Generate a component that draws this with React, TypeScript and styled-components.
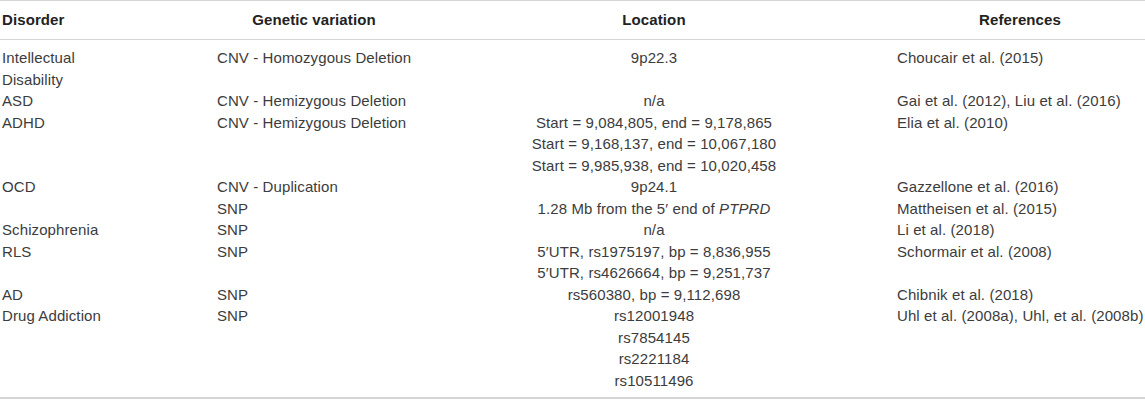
import React from 'react';
import styled, { createGlobalStyle } from 'styled-components';

type Row = {
  disorder: string;
  variation: string;
  location: React.ReactNode[];
  refs: string;
};

const rows: Row[] = [
  {
    disorder: 'Intellectual Disability',
    variation: 'CNV - Homozygous Deletion',
    location: ['9p22.3'],
    refs: 'Choucair et al. (2015)',
  },
  {
    disorder: 'ASD',
    variation: 'CNV - Hemizygous Deletion',
    location: ['n/a'],
    refs: 'Gai et al. (2012), Liu et al. (2016)',
  },
  {
    disorder: 'ADHD',
    variation: 'CNV - Hemizygous Deletion',
    location: [
      'Start = 9,084,805, end = 9,178,865',
      'Start = 9,168,137, end = 10,067,180',
      'Start = 9,985,938, end = 10,020,458',
    ],
    refs: 'Elia et al. (2010)',
  },
  {
    disorder: 'OCD',
    variation: 'CNV - Duplication',
    location: ['9p24.1'],
    refs: 'Gazzellone et al. (2016)',
  },
  {
    disorder: '',
    variation: 'SNP',
    location: [<>1.28 Mb from the 5′ end of <i>PTPRD</i></>],
    refs: 'Mattheisen et al. (2015)',
  },
  {
    disorder: 'Schizophrenia',
    variation: 'SNP',
    location: ['n/a'],
    refs: 'Li et al. (2018)',
  },
  {
    disorder: 'RLS',
    variation: 'SNP',
    location: [
      '5′UTR, rs1975197, bp = 8,836,955',
      '5′UTR, rs4626664, bp = 9,251,737',
    ],
    refs: 'Schormair et al. (2008)',
  },
  {
    disorder: 'AD',
    variation: 'SNP',
    location: ['rs560380, bp = 9,112,698'],
    refs: 'Chibnik et al. (2018)',
  },
  {
    disorder: 'Drug Addiction',
    variation: 'SNP',
    location: ['rs12001948', 'rs7854145', 'rs2221184', 'rs10511496'],
    refs: 'Uhl et al. (2008a), Uhl, et al. (2008b)',
  },
];

const App = () => {
  return <>
    <GlobalStyle />
    <Table>
      <colgroup>
        <col style={{ width: 215 }} />
        <col style={{ width: 198 }} />
        <col style={{ width: 482 }} />
        <col style={{ width: 250 }} />
      </colgroup>
      <thead>
        <tr>
          <HeadCell align="left">Disorder</HeadCell>
          <HeadCell align="center">Genetic variation</HeadCell>
          <HeadCell align="center">Location</HeadCell>
          <HeadCell align="center">References</HeadCell>
        </tr>
      </thead>
      <tbody>
        {rows.map((r, i) => (
          <BodyRow key={i}>
            <DisorderCell>{r.disorder}</DisorderCell>
            <Cell>{r.variation}</Cell>
            <LocationCell>
              {r.location.map((l, j) => <div key={j}>{l}</div>)}
            </LocationCell>
            <Cell>{r.refs}</Cell>
          </BodyRow>
        ))}
      </tbody>
    </Table>
  </>;
};

const GlobalStyle = createGlobalStyle`
  body {
    margin: 0;
    background: #fff;
    overflow: hidden;
    font-family: "Liberation Sans", Arial, sans-serif;
  }
`;

const Table = styled.table`
  width: 1145px;
  table-layout: fixed;
  border-collapse: collapse;
  border-top: 1px solid #d4d4d4;
  border-bottom: 2px solid #d4d4d4;
  font-size: 15px;
  line-height: 21.5px;
  letter-spacing: 0.1px;
  color: #3c3c3c;
`;

const HeadCell = styled.th<{ align: 'left' | 'center' }>`
  height: 38px;
  padding: 0 2px;
  text-align: ${({ align }) => align};
  font-weight: bold;
  color: #222;
  vertical-align: middle;
  border-bottom: 1px solid #d4d4d4;
`;

const BodyRow = styled.tr`
  &:first-child td {
    padding-top: 7px;
  }
  &:last-child td {
    padding-bottom: 6px;
  }
`;

const Cell = styled.td`
  padding: 0 2px;
  vertical-align: top;
  text-align: left;
  white-space: nowrap;
`;

const DisorderCell = styled(Cell)`
  white-space: normal;
  padding-right: 80px;
`;

const LocationCell = styled(Cell)`
  text-align: center;
`;

export default App;
